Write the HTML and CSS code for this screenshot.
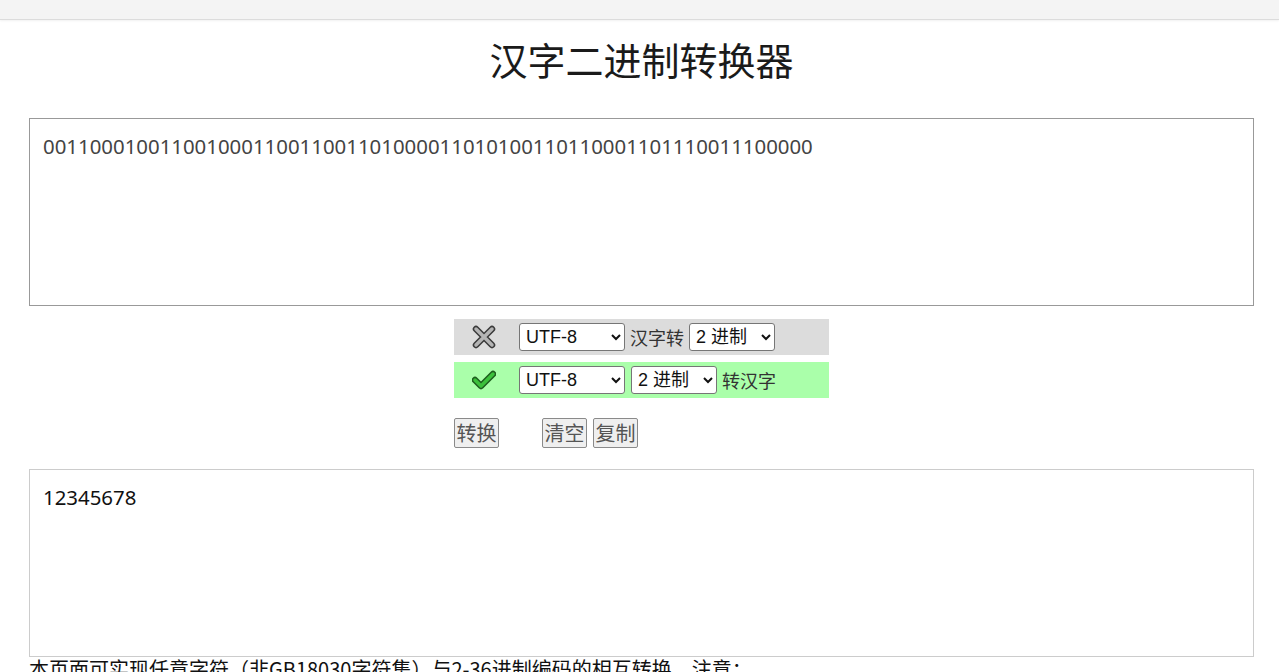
FILE: index.html
```html
<!DOCTYPE html>
<html lang="zh-CN">
<head>
<meta charset="utf-8">
<title>汉字二进制转换器</title>
<link rel="stylesheet" href="styles.css">
</head>
<body>
<div class="topbar"></div>
<div class="wrap">
  <h1 class="title">汉字二进制转换器</h1>
  <textarea class="box box-in">001100010011001000110011001101000011010100110110001101110011100000</textarea>
  <div class="panel">
    <div class="row row-off">
      <span class="icon">
        <svg width="24" height="24" viewBox="0 0 24 24">
          <path d="M4 4 L20 20 M20 4 L4 20" stroke="#3a3a3a" stroke-width="6.5" stroke-linecap="round" fill="none"/>
          <path d="M4 4 L20 20 M20 4 L4 20" stroke="#b4b4b4" stroke-width="3.5" stroke-linecap="round" fill="none"/>
        </svg>
      </span>
      <select class="sel sel-enc"><option>UTF-8</option><option>GBK</option></select>
      <span class="lbl">汉字转</span>
      <select class="sel sel-base"><option>2 进制</option><option>8 进制</option><option>16 进制</option></select>
    </div>
    <div class="row row-on">
      <span class="icon">
        <svg width="24" height="20" viewBox="0 0 24 20">
          <path d="M3 10 L9 16 L21 4" stroke="#1e5e1e" stroke-width="6.5" stroke-linecap="round" stroke-linejoin="round" fill="none"/>
          <path d="M3 10 L9 16 L21 4" stroke="#3cc03c" stroke-width="3.5" stroke-linecap="round" stroke-linejoin="round" fill="none"/>
        </svg>
      </span>
      <select class="sel sel-enc"><option>UTF-8</option><option>GBK</option></select>
      <select class="sel sel-base"><option>2 进制</option><option>8 进制</option><option>16 进制</option></select>
      <span class="lbl">转汉字</span>
    </div>
    <div class="actions">
      <button class="btn btn-convert">转换</button>
      <button class="btn">清空</button>
      <button class="btn">复制</button>
    </div>
  </div>
  <textarea class="box box-out">12345678</textarea>
  <p class="note">本页面可实现任意字符（非GB18030字符集）与2-36进制编码的相互转换，注意：</p>
</div>
</body>
</html>
```

FILE: styles.css
```css
html, body {
  margin: 0;
  padding: 0;
  background: #fff;
}
body {
  font-family: "Noto Sans", "Noto Sans CJK SC", sans-serif;
  color: #222;
  overflow: hidden;
}
.topbar {
  height: 19px;
  background: #f4f4f4;
  border-bottom: 1px solid #dcdcdc;
  box-shadow: 0 1px 2px rgba(0,0,0,0.06);
}
.wrap {
  padding: 0 25px 0 29px;
}
.title {
  margin: 13px 0 0;
  height: 51px;
  line-height: 51px;
  font-size: 38px;
  font-weight: normal;
  text-align: center;
  color: #1a1a1a;
  font-family: "Noto Sans CJK SC", sans-serif;
}
.box {
  display: block;
  box-sizing: border-box;
  width: 100%;
  height: 188px;
  margin: 0;
  padding: 13px;
  resize: none;
  font-family: "Noto Sans", "Noto Sans CJK SC", sans-serif;
  font-size: 20.4px;
  line-height: normal;
  outline: none;
}
.box-in {
  margin-top: 34px;
  border: 1px solid #999;
  color: #444;
}
.box-out {
  margin-top: 21px;
  border: 1px solid #ccc;
  color: #111;
  height: 188px;
}
.panel {
  width: 375px;
  margin: 13px auto 0;
}
.row {
  display: flex;
  align-items: center;
  gap: 5px;
  height: 36px;
  font-size: 18px;
  color: #333;
}
.row + .row {
  margin-top: 7px;
}
.row-off { background: #dcdcdc; }
.row-on { background: #aaffaa; }
.icon {
  width: 60px;
  display: flex;
  justify-content: center;
  align-items: center;
}
.sel {
  box-sizing: border-box;
  height: 28px;
  font-size: 18px;
  font-family: "Liberation Sans", "Noto Sans CJK SC", sans-serif;
  color: #111;
  background: #fff;
  border: 1px solid #767676;
  border-radius: 3px;
  padding: 0 2px;
  margin: 0;
}
.sel-enc { width: 106px; }
.sel-base { width: 86px; }
.row-on .sel-base { margin-left: 1px; }
.lbl {
  font-family: "Noto Sans CJK SC", sans-serif;
  font-size: 18px;
  color: #333;
}
.actions {
  display: flex;
  margin-top: 20px;
  gap: 6px;
}
.btn {
  box-sizing: border-box;
  width: 45px;
  height: 30px;
  padding: 0;
  font-size: 20px;
  font-family: "Noto Sans CJK SC", sans-serif;
  color: #555;
  background: #efefef;
  border: 1px solid #8a8a8a;
  border-radius: 2px;
  line-height: 1;
  margin: 0;
}
.btn-convert {
  margin-right: 37px;
}
.note {
  margin: 0;
  font-size: 20px;
  line-height: 24px;
  color: #111;
  font-family: "Noto Sans CJK SC", sans-serif;
}
```
